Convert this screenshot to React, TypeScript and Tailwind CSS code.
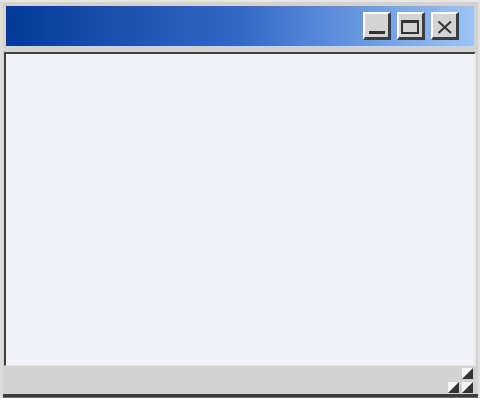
import React from "react";

function Btn({ children }: { children: React.ReactNode }) {
  return (
    <div className="w-[28px] h-[28px] bg-[#d4d4d4] border-t-2 border-l-2 border-t-white border-l-white border-b-[3px] border-r-[3px] border-b-[#3c3c3c] border-r-[#3c3c3c] flex items-center justify-center">
      {children}
    </div>
  );
}

function Grip() {
  return (
    <svg width="11" height="11" viewBox="0 0 11 11">
      <polygon points="0,0 11,0 0,11" fill="#f4f4f4" />
      <polygon points="11,0 11,11 0,11" fill="#333333" />
    </svg>
  );
}

export default function App() {
  return (
    <div className="w-[480px] h-[398px] bg-[#d2d2d2] flex flex-col border-t-[2px] border-t-[#e6e6e6] border-l-[3px] border-l-[#dcdcdc] border-r-[2px] border-r-[#e0e0e0] overflow-hidden">
      <div className="mt-[4px] ml-[3px] mr-[4px] h-[40px] bg-gradient-to-r from-[#023a9a] via-[#3468c8] to-[#9cc4f6] flex items-center justify-end gap-[6px] pr-[15px]">
        <Btn>
          <svg width="23" height="23" viewBox="0 0 23 23">
            <rect x="4" y="17" width="16" height="3" fill="#333" />
          </svg>
        </Btn>
        <Btn>
          <svg width="23" height="23" viewBox="0 0 23 23">
            <rect x="3" y="7" width="16" height="12" fill="none" stroke="#333" strokeWidth="2" />
            <rect x="2" y="6" width="18" height="3" fill="#333" />
          </svg>
        </Btn>
        <Btn>
          <svg width="23" height="23" viewBox="0 0 23 23">
            <path d="M5.5 7.5 L18 19 M18 7.5 L5.5 19" stroke="#333" strokeWidth="2" />
          </svg>
        </Btn>
      </div>
      <div className="h-[6px]" />
      <div className="flex-1 ml-[1px] mr-[2px] bg-[#f0f2f8] border-t-2 border-l-2 border-t-[#404040] border-l-[#404040] border-r-2 border-r-[#e8e8e8] border-b border-b-[#e4e4e4]" />
      <div className="h-[28px] flex items-end justify-end pr-[5px] pb-[1px]">
        <div className="flex flex-col items-end gap-[3px]">
          <Grip />
          <div className="flex gap-[3px]">
            <Grip />
            <Grip />
          </div>
        </div>
      </div>
      <div className="h-[4px] bg-[#3c3c3c] border-b border-b-[#6a6a6a]" />
    </div>
  );
}
